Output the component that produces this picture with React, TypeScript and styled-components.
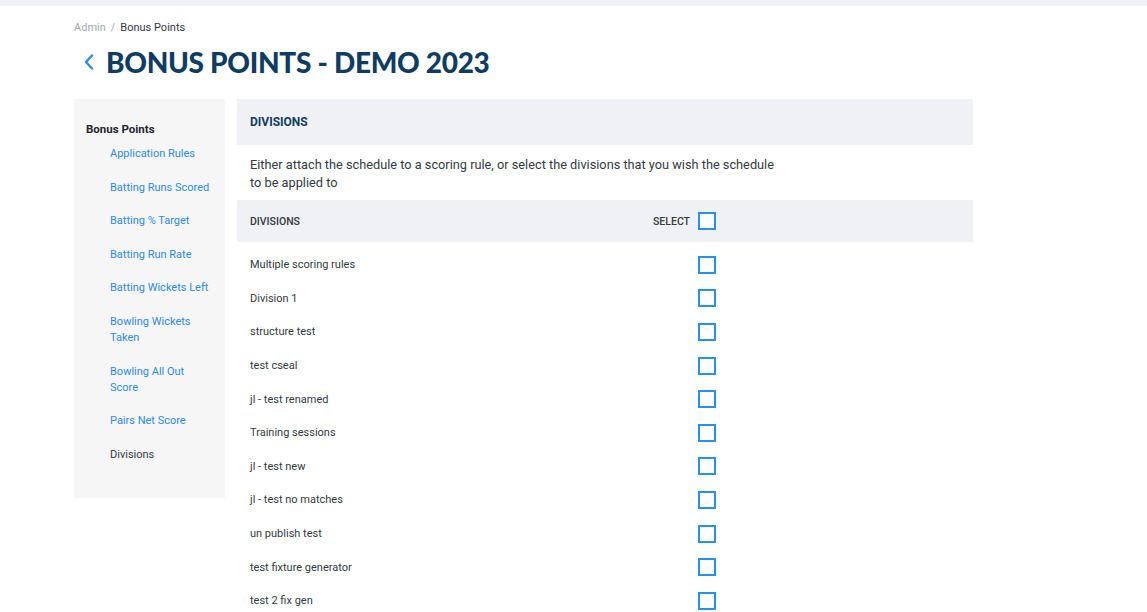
import React, { useState } from 'react';
import styled, { createGlobalStyle } from 'styled-components';

const COLORS = {
    navy: '#0e3c63',
    link: '#2b8be6',
    text: '#333a42',
    muted: '#a3a8b0',
    panel: '#f0f1f5',
    sidebar: '#f6f6f7',
    check: '#2590ee',
};

const GlobalStyle = createGlobalStyle`
    html, body {
        margin: 0;
        padding: 0;
        background: #ffffff;
        font-family: Roboto, 'Liberation Sans', Arial, sans-serif;
        color: ${COLORS.text};
    }
`;

const TopBar = styled.div`
    height: 6px;
    background: ${COLORS.panel};
`;

const Page = styled.div`
    padding: 15px 0 0 74px;
    width: 899px;
`;

const Breadcrumb = styled.div`
    display: flex;
    align-items: center;
    gap: 5px;
    font-size: 11px;
    line-height: 14px;
    color: ${COLORS.text};
`;

const Crumb = styled.span<{ $muted?: boolean }>`
    color: ${(p) => (p.$muted ? COLORS.muted : COLORS.text)};
`;

const TitleRow = styled.div`
    display: flex;
    align-items: center;
    gap: 12px;
    margin: 7px 0 0 10px;
    height: 40px;
`;

const BackButton = styled.button`
    border: none;
    background: none;
    padding: 0;
    display: flex;
    align-items: center;
    cursor: pointer;
`;

const Title = styled.h1`
    margin: 0;
    font-family: Lato, 'Open Sans', sans-serif;
    font-weight: 900;
    font-size: 28px;
    letter-spacing: -0.3px;
    color: ${COLORS.navy};
`;

const Layout = styled.div`
    display: flex;
    align-items: flex-start;
    gap: 12px;
    margin-top: 17px;
`;

const Sidebar = styled.nav`
    width: 151px;
    min-height: 399px;
    box-sizing: border-box;
    background: ${COLORS.sidebar};
    padding: 22px 14px 20px 12px;
`;

const SideTitle = styled.div`
    font-size: 11.5px;
    font-weight: 700;
    color: #1f2730;
    line-height: 16px;
    margin-bottom: 9px;
`;

const SideList = styled.ul`
    list-style: none;
    margin: 0;
    padding: 0 0 0 24px;
    display: flex;
    flex-direction: column;
    gap: 17.6px;
`;

const SideItem = styled.li<{ $active?: boolean }>`
    font-size: 11px;
    line-height: 16px;
    color: ${(p) => (p.$active ? COLORS.text : COLORS.link)};
    cursor: pointer;
`;

const Main = styled.section`
    width: 736px;
`;

const PanelHeader = styled.div`
    height: 46px;
    display: flex;
    align-items: center;
    padding: 0 13px;
    background: ${COLORS.panel};
    font-size: 12px;
    font-weight: 700;
    color: ${COLORS.navy};
`;

const Description = styled.p`
    margin: 0;
    padding: 11px 13px 8px;
    max-width: 528px;
    font-size: 12.75px;
    line-height: 18px;
    color: ${COLORS.text};
`;

const Row = styled.div<{ $head?: boolean }>`
    display: grid;
    grid-template-columns: 1fr auto;
    align-items: center;
    height: ${(p) => (p.$head ? '42px' : '33.6px')};
    padding: 0 257px 0 13px;
    background: ${(p) => (p.$head ? COLORS.panel : 'transparent')};
    font-size: ${(p) => (p.$head ? '10.5px' : '11px')};
    font-weight: ${(p) => (p.$head ? 500 : 400)};
    text-transform: ${(p) => (p.$head ? 'uppercase' : 'none')};
    color: ${COLORS.text};
`;

const RowList = styled.div`
    padding-top: 6px;
`;

const SelectCell = styled.div`
    display: flex;
    align-items: center;
    gap: 8px;
`;

const Check = styled.span<{ $on?: boolean }>`
    width: 18px;
    height: 18px;
    box-sizing: border-box;
    border: 2px solid ${COLORS.check};
    background: ${(p) => (p.$on ? COLORS.check : '#fff')};
    cursor: pointer;
`;

const MENU = [
    'Application Rules',
    'Batting Runs Scored',
    'Batting % Target',
    'Batting Run Rate',
    'Batting Wickets Left',
    'Bowling Wickets Taken',
    'Bowling All Out Score',
    'Pairs Net Score',
    'Divisions',
];

const DIVISIONS = [
    'Multiple scoring rules',
    'Division 1',
    'structure test',
    'test cseal',
    'jl - test renamed',
    'Training sessions',
    'jl - test new',
    'jl - test no matches',
    'un publish test',
    'test fixture generator',
    'test 2 fix gen',
];

export default function App() {
    const [selected, setSelected] = useState<Record<string, boolean>>({});
    const allOn = DIVISIONS.every((d) => selected[d]);

    const toggle = (name: string) => setSelected((s) => ({ ...s, [name]: !s[name] }));
    const toggleAll = () => {
        const next: Record<string, boolean> = {};
        DIVISIONS.forEach((d) => (next[d] = !allOn));
        setSelected(next);
    };

    return (
        <>
            <GlobalStyle />
            <TopBar />
            <Page>
                <Breadcrumb>
                    <Crumb $muted>Admin</Crumb>
                    <Crumb $muted>/</Crumb>
                    <Crumb>Bonus Points</Crumb>
                </Breadcrumb>

                <TitleRow>
                    <BackButton aria-label="Back">
                        <svg width="10" height="16" viewBox="0 0 10 16">
                            <path d="M8 1.5 L2 8 L8 14.5" fill="none" stroke={COLORS.link} strokeWidth="2.4" strokeLinecap="round" strokeLinejoin="round" />
                        </svg>
                    </BackButton>
                    <Title>BONUS POINTS - DEMO 2023</Title>
                </TitleRow>

                <Layout>
                    <Sidebar>
                        <SideTitle>Bonus Points</SideTitle>
                        <SideList>
                            {MENU.map((item) => (
                                <SideItem key={item} $active={item === 'Divisions'}>
                                    {item}
                                </SideItem>
                            ))}
                        </SideList>
                    </Sidebar>

                    <Main>
                        <PanelHeader>DIVISIONS</PanelHeader>
                        <Description>
                            Either attach the schedule to a scoring rule, or select the divisions that you wish the schedule to be applied to
                        </Description>
                        <Row $head>
                            <span>Divisions</span>
                            <SelectCell>
                                <span>Select</span>
                                <Check $on={allOn} onClick={toggleAll} />
                            </SelectCell>
                        </Row>
                        <RowList>
                            {DIVISIONS.map((d) => (
                                <Row key={d}>
                                    <span>{d}</span>
                                    <SelectCell>
                                        <Check $on={!!selected[d]} onClick={() => toggle(d)} />
                                    </SelectCell>
                                </Row>
                            ))}
                        </RowList>
                    </Main>
                </Layout>
            </Page>
        </>
    );
}
